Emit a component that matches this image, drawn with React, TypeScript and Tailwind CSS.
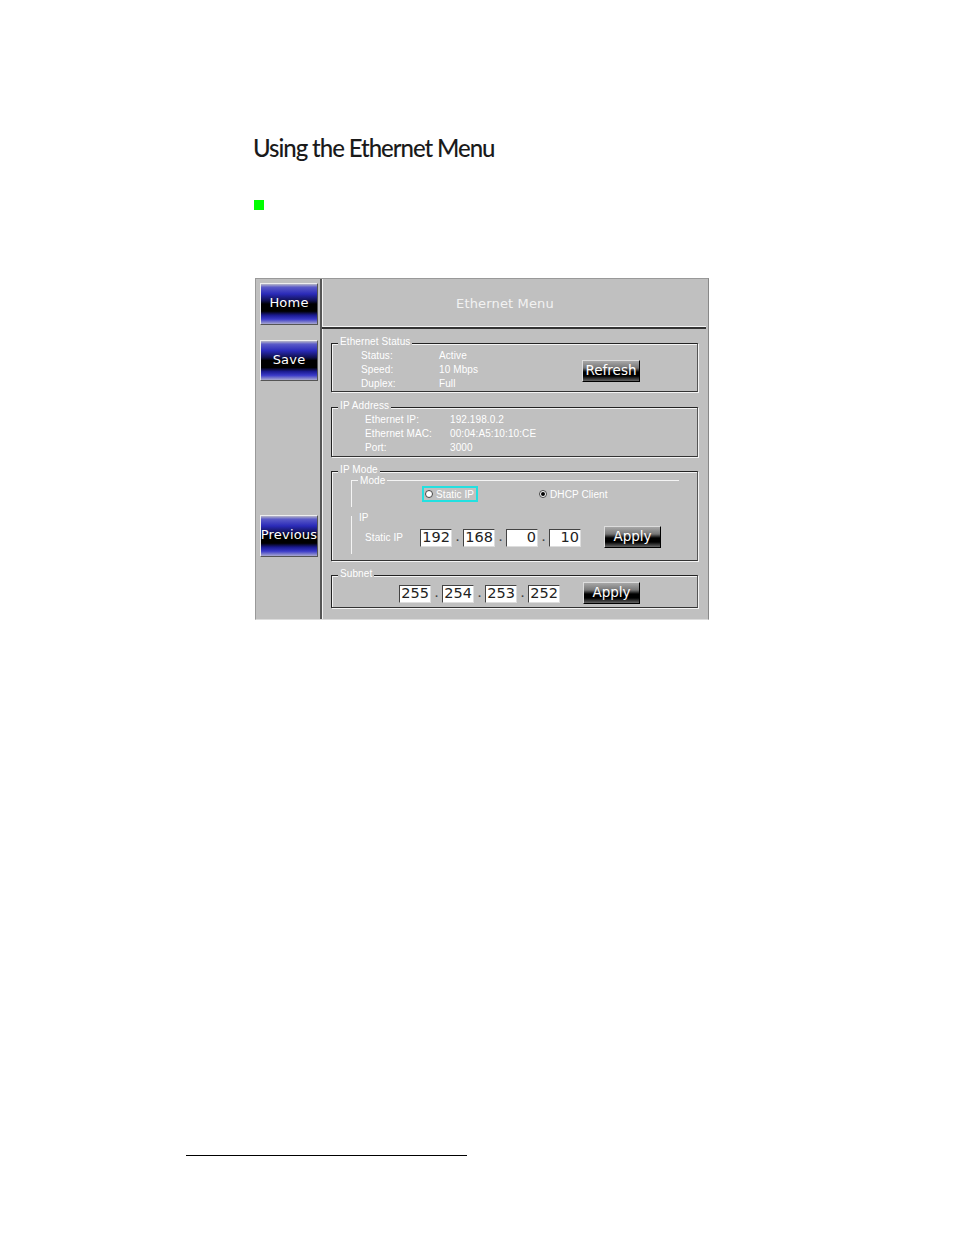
const btnGradient =
  "bg-[linear-gradient(#b8b8c8_0%,#5a5ac8_8%,#2a2ab8_25%,#101050_42%,#000_50%,#000_68%,#1a1a90_78%,#3a3ac8_88%,#a8a8d0_100%)]";
const smallBtn =
  "flex items-center justify-center border border-t-[#ddd] border-l-[#ddd] border-r-black border-b-black bg-[linear-gradient(#a8a8a8_0%,#777_35%,#000_55%,#000_75%,#666_100%)] pb-[2px] font-['DejaVu_Sans',sans-serif] text-[13.5px] text-white";
const uiFont = "font-['Liberation_Sans',Arial,sans-serif]";

function NavButton({ label, className }: { label: string; className: string }) {
  return (
    <div
      className={`flex w-[58px] items-center justify-center border border-t-[#eee] border-l-[#eee] border-r-[#555] border-b-[#555] pb-0.5 font-['DejaVu_Sans',sans-serif] text-[13px] tracking-[0.2px] text-white ${btnGradient} ${className}`}
    >
      {label}
    </div>
  );
}

function GroupBox({
  legend,
  className,
  children,
}: {
  legend: string;
  className: string;
  children: React.ReactNode;
}) {
  return (
    <div
      className={`relative ml-[9px] w-[367px] border border-t-[#222] border-l-[#222] border-r-[#555] border-b-[#333] shadow-[1px_1px_0_#f4f4f4,inset_1px_1px_0_#f4f4f4] ${className}`}
    >
      <span className="absolute -top-[9px] left-[6px] bg-[#c0c0c0] px-[2px] text-[10px] leading-[13px] tracking-[0.1px] text-white">
        {legend}
      </span>
      {children}
    </div>
  );
}

function InfoRow({ label, value, valueClass }: { label: string; value: string; valueClass: string }) {
  return (
    <div className="flex h-[14.3px] items-center text-[10px] tracking-[0.1px] text-white">
      <span className={valueClass}>{label}</span>
      <span>{value}</span>
    </div>
  );
}

function IpField({ value, width = "w-[32px]" }: { value: string; width?: string }) {
  return (
    <div
      className={`flex h-[18px] items-center justify-end border border-t-[#444] border-l-[#444] border-r-[#ddd] border-b-[#ddd] bg-white pr-[1px] font-['DejaVu_Sans',sans-serif] text-[14.5px] text-[#222] ${width}`}
    >
      {value}
    </div>
  );
}

function Dot() {
  return <span className="w-[11px] text-center text-[11px] font-bold text-[#444]">.</span>;
}

function Radio({ checked }: { checked?: boolean }) {
  return (
    <span className="flex size-[8px] shrink-0 items-center justify-center rounded-full border border-[#444] bg-white">
      {checked && <span className="size-[4px] rounded-full bg-black" />}
    </span>
  );
}

export default function App() {
  return (
    <div className="h-[1235px] w-[954px] bg-white">
      <div className="pt-[134px] pl-[253px]">
        <h1 className="font-['Lato',sans-serif] text-[24px] leading-[28px] font-medium tracking-[-1.05px] whitespace-nowrap text-[#1a1a1a]">
          Using the Ethernet Menu
        </h1>
        <div className="mt-[38px] ml-px size-[10px] bg-[#00ff00]" />
      </div>

      <div
        className={`mt-[68px] ml-[255px] flex h-[342px] w-[454px] border border-t-[#999] border-l-[#999] border-r-[#888] border-b-[#ddd] bg-[#c0c0c0] ${uiFont}`}
      >
        {/* left column */}
        <div className="flex w-[66px] flex-col border-r-2 border-r-[#555] pt-[4px] pl-[4px] shadow-[1px_0_0_#f4f4f4]">
          <NavButton label="Home" className="h-[42px]" />
          <NavButton label="Save" className="mt-[15px] h-[41px]" />
          <NavButton label="Previous" className="mt-[134px] h-[42px]" />
        </div>

        {/* right column */}
        <div className="flex-1">
          <div className="mr-[2px] flex h-[50px] items-center justify-center border-b-2 border-b-[#333] pt-[2px] pr-[18px] font-['DejaVu_Sans',sans-serif] text-[13px] tracking-[0.15px] text-[#f2f2f2] shadow-[inset_0_-1px_0_#f4f4f4]">
            Ethernet Menu
          </div>

          <GroupBox legend="Ethernet Status" className="mt-[14px] h-[49px]">
            <div className="flex pt-[4px]">
              <div className="w-[250px]">
                <InfoRow label="Status:" value="Active" valueClass="ml-[29px] w-[78px]" />
                <InfoRow label="Speed:" value="10 Mbps" valueClass="ml-[29px] w-[78px]" />
                <InfoRow label="Duplex:" value="Full" valueClass="ml-[29px] w-[78px]" />
              </div>
              <div className={`mt-[12px] h-[22px] w-[58px] ${smallBtn}`}>Refresh</div>
            </div>
          </GroupBox>

          <GroupBox legend="IP Address" className="mt-[15px] h-[50px]">
            <div className="pt-[4px]">
              <InfoRow label="Ethernet IP:" value="192.198.0.2" valueClass="ml-[33px] w-[85px]" />
              <InfoRow label="Ethernet MAC:" value="00:04:A5:10:10:CE" valueClass="ml-[33px] w-[85px]" />
              <InfoRow label="Port:" value="3000" valueClass="ml-[33px] w-[85px]" />
            </div>
          </GroupBox>

          <GroupBox legend="IP Mode" className="mt-[14px] h-[90px]">
            <div className="relative mt-[8px] ml-[19px] h-[27px] w-[328px] border-t border-l border-t-[#f4f4f4] border-l-[#f4f4f4]">
              <span className="absolute -top-[7px] left-[6px] bg-[#c0c0c0] px-[2px] text-[10px] leading-[13px] tracking-[0.1px] text-white">
                Mode
              </span>
              <div className="flex items-center pt-[5px] text-[10px] tracking-[0.1px] whitespace-nowrap text-white">
                <div className="ml-[70px] flex h-[16px] w-[56px] items-center gap-[3px] border-2 border-[#22e0e0] pl-[1px]">
                  <Radio />
                  <span>Static IP</span>
                </div>
                <div className="ml-[61px] flex items-center gap-[3px]">
                  <Radio checked />
                  <span>DHCP Client</span>
                </div>
              </div>
            </div>
            <div className="relative mt-[9px] ml-[19px] h-[38px] border-l border-l-[#f4f4f4]">
              <span className="absolute -top-[5px] left-[5px] bg-[#c0c0c0] px-[2px] text-[10px] leading-[13px] text-white">
                IP
              </span>
              <div className="flex items-center pt-[11px]">
                <span className="ml-[13px] w-[55px] text-[10px] tracking-[0.1px] text-white">
                  Static IP
                </span>
                <IpField value="192" />
                <Dot />
                <IpField value="168" />
                <Dot />
                <IpField value="0" />
                <Dot />
                <IpField value="10" />
                <div className={`-mt-[1px] ml-[23px] h-[22px] w-[57px] ${smallBtn}`}>Apply</div>
              </div>
            </div>
          </GroupBox>

          <GroupBox legend="Subnet" className="mt-[14px] h-[33px]">
            <div className="flex items-center pt-[7px] pl-[67px]">
              <IpField value="255" />
              <Dot />
              <IpField value="254" />
              <Dot />
              <IpField value="253" />
              <Dot />
              <IpField value="252" />
              <div className={`-mt-[1px] ml-[23px] h-[22px] w-[57px] ${smallBtn}`}>Apply</div>
            </div>
          </GroupBox>
        </div>
      </div>

      <div className="mt-[535px] ml-[186px] h-px w-[281px] bg-black" />
    </div>
  );
}
